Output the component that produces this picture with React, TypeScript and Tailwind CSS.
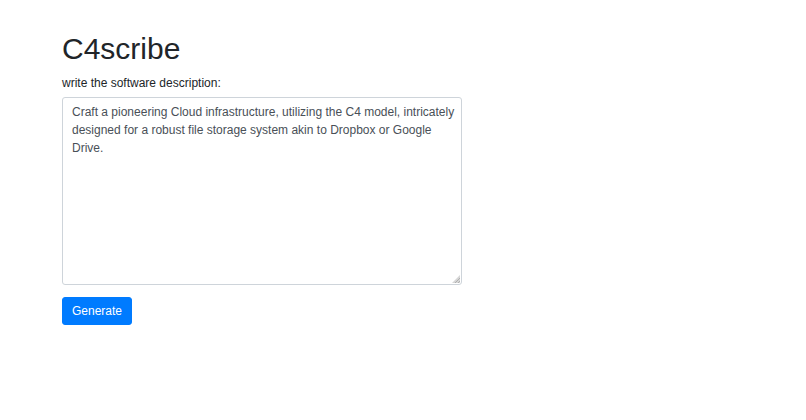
export default function App() {
  return (
    <div className="min-h-screen bg-white font-['Liberation_Sans',Arial,sans-serif] text-[#212529]">
      <div className="pl-[62px] pt-[31px]">
        <h1 className="mb-[7px] text-[30px] font-normal leading-[1.2]">C4scribe</h1>

        <form className="w-[400px]" onSubmit={(e) => e.preventDefault()}>
          <div className="mb-[12px]">
            <label htmlFor="description" className="mb-[5px] block text-[12px] leading-[18px]">
              write the software description:
            </label>
            <div className="relative">
              <textarea
                id="description"
                rows={10}
                defaultValue="Craft a pioneering Cloud infrastructure, utilizing the C4 model, intricately designed for a robust file storage system akin to Dropbox or Google Drive."
                className="block h-[188px] w-full resize-none rounded-[3px] border border-[#ced4da] bg-white py-[4.5px] pl-[9px] pr-[4px] text-[12px] leading-[18px] text-[#495057] outline-none"
              />
              {/* resize grip */}
              <svg
                className="pointer-events-none absolute bottom-[2px] right-[2px]"
                width="8"
                height="8"
                viewBox="0 0 8 8"
              >
                <path d="M8 0 L8 8 L0 8 Z" fill="#d6d6d6" />
                <path d="M8 3 L3 8 M8 6 L6 8" stroke="#b0b0b0" strokeWidth="1" />
              </svg>
            </div>
          </div>
          <button
            type="submit"
            className="h-[28px] rounded-[3px] border border-[#007bff] bg-[#007bff] px-[9px] text-[12px] leading-[18px] text-white"
          >
            Generate
          </button>
        </form>
      </div>
    </div>
  );
}
